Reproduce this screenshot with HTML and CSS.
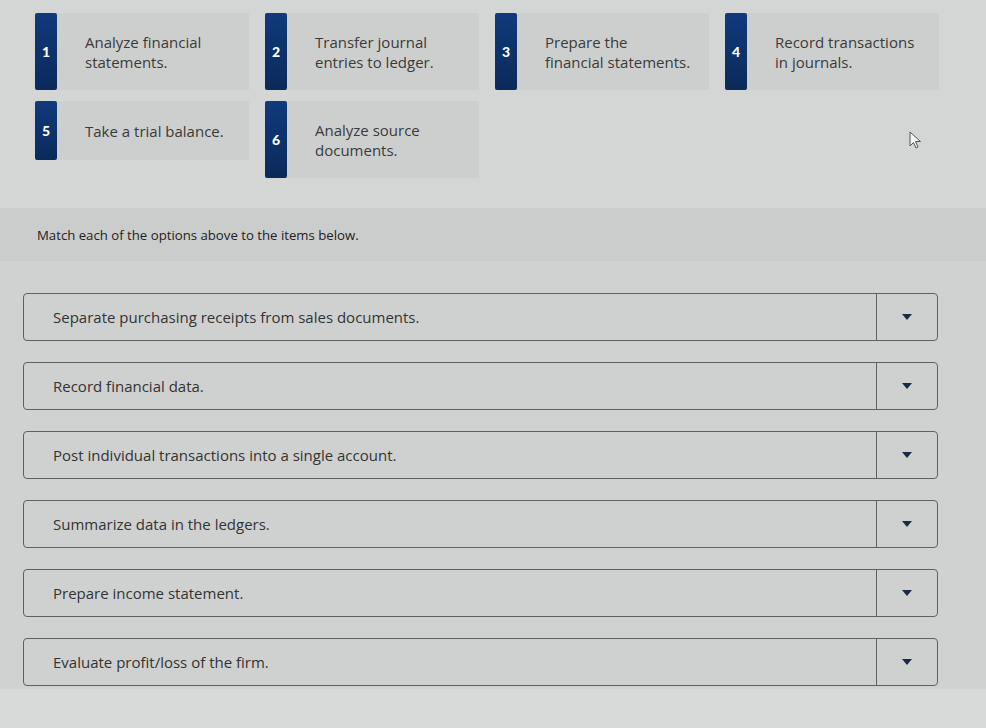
FILE: index.html
```html
<!DOCTYPE html>
<html>
<head>
<meta charset="utf-8">
<link rel="stylesheet" href="styles.css">
</head>
<body>
<div class="page">
  <section class="options">
    <div class="card"><div class="badge">1</div><div class="label">Analyze financial<br>statements.</div></div>
    <div class="card"><div class="badge">2</div><div class="label">Transfer journal<br>entries to ledger.</div></div>
    <div class="card"><div class="badge">3</div><div class="label">Prepare the<br>financial statements.</div></div>
    <div class="card"><div class="badge">4</div><div class="label">Record transactions<br>in journals.</div></div>
    <div class="card"><div class="badge">5</div><div class="label single">Take a trial balance.</div></div>
    <div class="card"><div class="badge">6</div><div class="label">Analyze source<br>documents.</div></div>
  </section>
  <div class="cursor">
    <svg width="16" height="20" viewBox="0 0 16 20"><path d="M1 1 L1 15 L4.5 11.5 L7 17 L9 16 L6.5 10.5 L11.5 10.5 Z" fill="#f4f4f4" stroke="#555" stroke-width="1"/></svg>
  </div>
  <div class="instruction">Match each of the options above to the items below.</div>
  <section class="items">
    <div class="item"><div class="text">Separate purchasing receipts from sales documents.</div><div class="toggle"><span class="arrow"></span></div></div>
    <div class="item"><div class="text">Record financial data.</div><div class="toggle"><span class="arrow"></span></div></div>
    <div class="item"><div class="text">Post individual transactions into a single account.</div><div class="toggle"><span class="arrow"></span></div></div>
    <div class="item"><div class="text">Summarize data in the ledgers.</div><div class="toggle"><span class="arrow"></span></div></div>
    <div class="item"><div class="text">Prepare income statement.</div><div class="toggle"><span class="arrow"></span></div></div>
    <div class="item"><div class="text">Evaluate profit/loss of the firm.</div><div class="toggle"><span class="arrow"></span></div></div>
  </section>
  <div class="footer"></div>
</div>
</body>
</html>
```
FILE: styles.css
```css
html, body {
  margin: 0;
  padding: 0;
  background: #d4d6d5;
}
.page {
  width: 986px;
  height: 728px;
  overflow: hidden;
  font-family: "Open Sans", Lato, Arial, sans-serif;
  font-variant-ligatures: none;
  color: #333;
  position: relative;
}
.options {
  display: grid;
  grid-template-columns: repeat(4, 214px);
  column-gap: 16px;
  row-gap: 11px;
  padding: 13px 0 0 35px;
  align-items: start;
  align-content: start;
  height: 195px;
  box-sizing: border-box;
}
.card {
  display: flex;
  align-items: stretch;
  background: #cdcfce;
}
.badge {
  width: 22px;
  flex: none;
  background: linear-gradient(#0f3a7c, #0b2a5a);
  border-radius: 2px;
  color: #fff;
  font-family: Lato, Arial, sans-serif;
  font-weight: 900;
  font-size: 14px;
  display: flex;
  align-items: center;
  justify-content: center;
}
.label {
  padding: 19px 6px 18px 28px;
  font-size: 15px;
  line-height: 20px;
  color: #3a3a3a;
  white-space: nowrap;
}
.label.single {
  padding-top: 20px;
  padding-bottom: 19px;
}
.cursor {
  position: absolute;
  left: 909px;
  top: 131px;
}
.instruction {
  background: #cbcdcc;
  margin-top: 13px;
  padding: 18px 0 0 37px;
  height: 53px;
  box-sizing: border-box;
  font-size: 13.2px;
  color: #222;
}
.items {
  display: flex;
  flex-direction: column;
  gap: 21px;
  padding: 32px 0 0 0;
  background: #d0d2d1;
  height: 428px;
  box-sizing: border-box;
}
.item {
  margin-left: 23px;
  width: 915px;
  height: 48px;
  box-sizing: border-box;
  border: 1px solid #5f6161;
  border-radius: 4px;
  display: flex;
  align-items: center;
  background: #cfd1d0;
}
.text {
  flex: 1;
  padding-left: 29px;
  font-size: 15px;
  color: #333;
}
.toggle {
  width: 60px;
  height: 100%;
  border-left: 1px solid #5f6161;
  display: flex;
  align-items: center;
  justify-content: center;
}
.arrow {
  width: 0;
  height: 0;
  border-left: 5px solid transparent;
  border-right: 5px solid transparent;
  border-top: 6px solid #1a2a44;
}
.footer {
  height: 40px;
  background: #d8dad9;
}
```
